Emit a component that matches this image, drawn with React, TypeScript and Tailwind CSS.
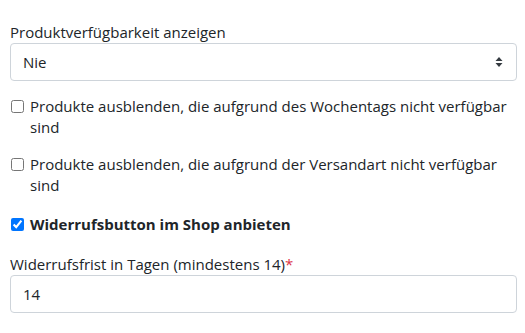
import React from 'react'

const font = { fontFamily: '"Open Sans", "Liberation Sans", Arial, sans-serif' }

function SelectArrows() {
  return (
    <svg width="8" height="12" viewBox="0 0 8 12" className="shrink-0">
      <path d="M4 1 L7.5 5 H0.5 Z" fill="#343a40" />
      <path d="M4 11 L7.5 7 H0.5 Z" fill="#343a40" />
    </svg>
  )
}

function CheckRow({ label, checked, bold }: { label: string; checked?: boolean; bold?: boolean }) {
  return (
    <label className="flex items-start gap-[6px]">
      <input
        type="checkbox"
        defaultChecked={checked}
        className="w-[13px] h-[13px] mt-[4px] ml-[1px] shrink-0"
      />
      <span className={`leading-[21px] ${bold ? 'font-bold' : ''}`}>{label}</span>
    </label>
  )
}

export default function App() {
  return (
    <div
      className="w-[525px] h-[333px] bg-white text-[#212529] text-[15px] pl-[10px] pr-[8px] pt-[21px]"
      style={font}
    >
      <div className="leading-[22px]">Produktverfügbarkeit anzeigen</div>
      <div className="h-[38px] border border-[#ced4da] rounded-[4px] flex items-center justify-between pl-[12px] pr-[13px]">
        <span>Nie</span>
        <SelectArrows />
      </div>

      <div className="mt-[15px]">
        <CheckRow label="Produkte ausblenden, die aufgrund des Wochentags nicht verfügbar sind" />
      </div>
      <div className="mt-[16px]">
        <CheckRow label="Produkte ausblenden, die aufgrund der Versandart nicht verfügbar sind" />
      </div>
      <div className="mt-[18px]">
        <CheckRow label="Widerrufsbutton im Shop anbieten" checked bold />
      </div>

      <div className="mt-[18px] leading-[22px]">
        Widerrufsfrist in Tagen (mindestens 14)<span className="text-[#dc3545]">*</span>
      </div>
      <div className="h-[38px] border border-[#ced4da] rounded-[4px] flex items-center pl-[12px]">
        14
      </div>
    </div>
  )
}
